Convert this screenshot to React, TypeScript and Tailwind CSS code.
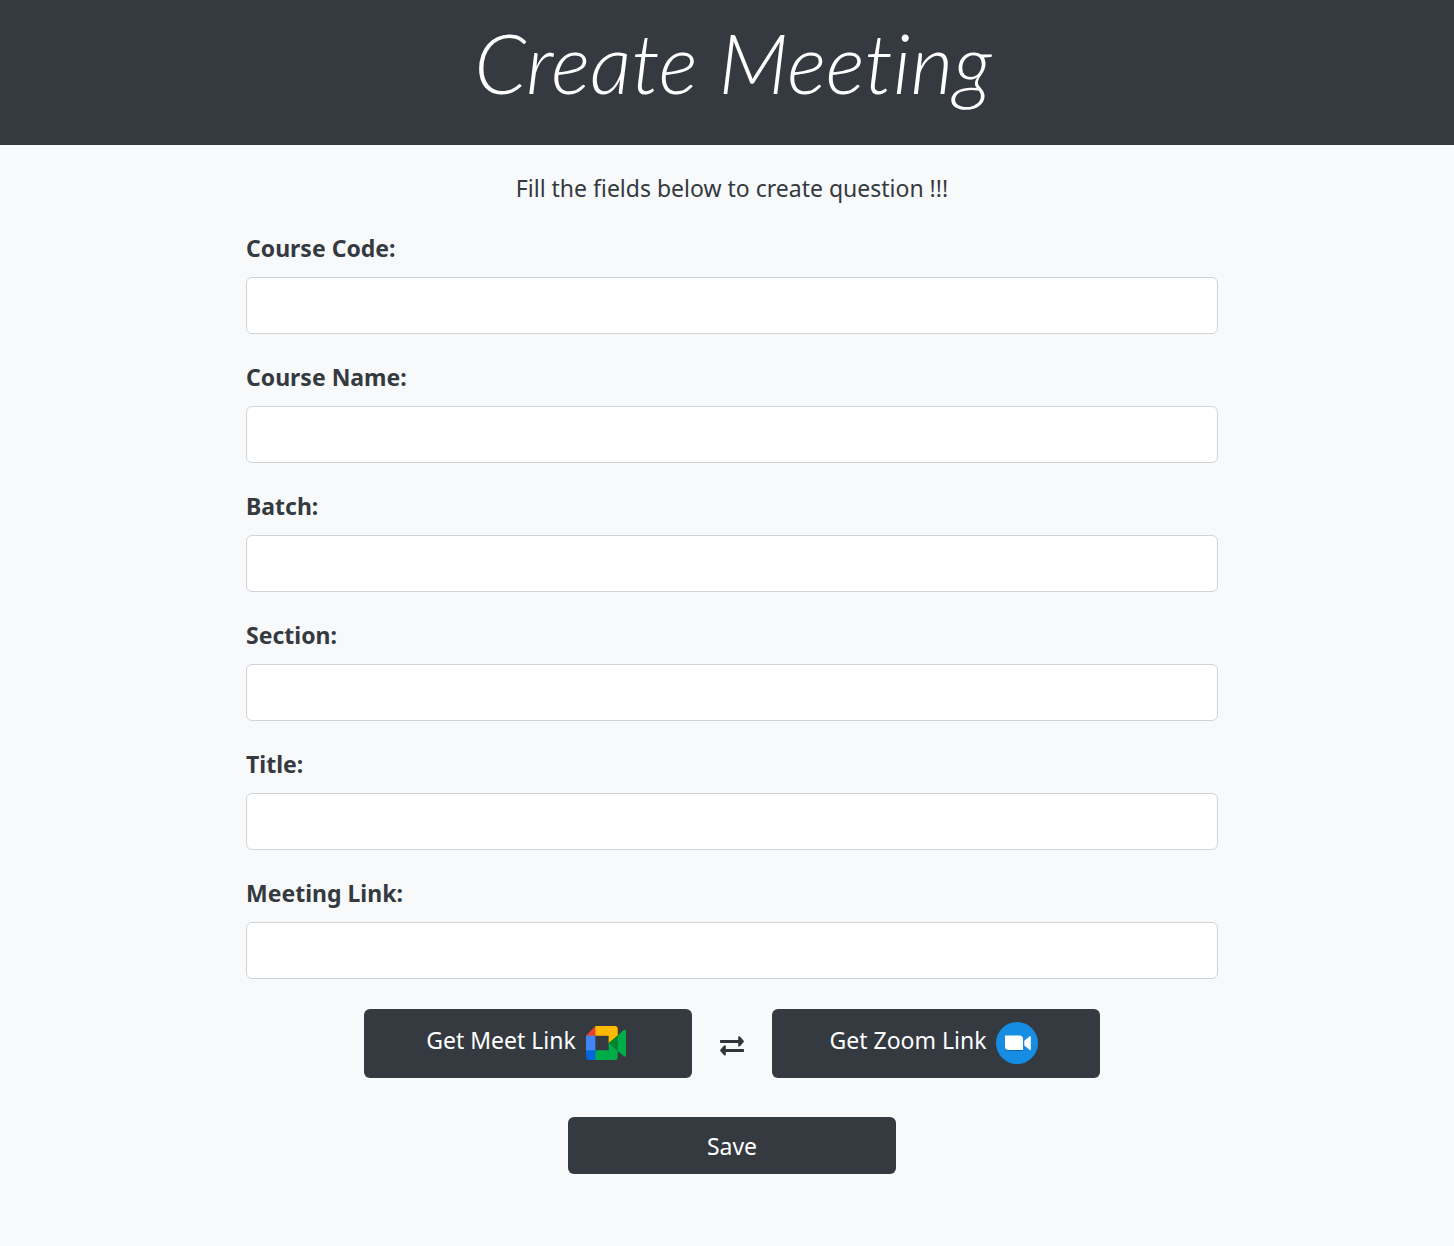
import { useId } from 'react';

const fields = ['Course Code:', 'Course Name:', 'Batch:', 'Section:', 'Title:', 'Meeting Link:'];

function Field({ label }: { label: string }) {
  const id = useId();
  return (
    <div className="flex flex-col gap-[11px]">
      <label htmlFor={id} className="font-bold">
        {label}
      </label>
      <input
        id={id}
        type="text"
        className="h-[57px] w-full rounded-md border border-[#ced4da] bg-white px-4 outline-none focus:border-[#80bdff]"
      />
    </div>
  );
}

function MeetIcon() {
  return (
    <svg viewBox="0 0 87.5 72" preserveAspectRatio="none" className="h-[34px] w-10" aria-hidden="true">
      <path fill="#00832d" d="M49.5 36l8.53 9.75 11.47 7.33 2-17.02-2-16.64-11.69 6.44z" />
      <path fill="#0066da" d="M0 51.5V66c0 3.315 2.685 6 6 6h14.5l3-10.96-3-9.54-9.95-3z" />
      <path fill="#e94235" d="M20.500 0L0 20.500l10.550 3 9.950-3 2.950-9.410z" />
      <path fill="#4285f4" d="M20.500 20.500H0v31h20.500z" />
      <path
        fill="#00ac47"
        d="M82.600 8.680L69.500 19.420v33.660l13.160 10.790c1.970 1.540 4.850.135 4.850-2.370V11c0-2.535-2.945-3.925-4.910-2.320zM49.500 36v15.500h-29V72h43c3.315 0 6-2.685 6-6V53.080z"
      />
      <path fill="#ffba00" d="M63.500 0h-43v20.500h29V36l20-16.570V6c0-3.315-2.685-6-6-6z" />
    </svg>
  );
}

function ZoomIcon() {
  return (
    <svg viewBox="0 0 42 44" className="h-11 w-[42px]" aria-hidden="true">
      <circle cx="21" cy="22.500" r="21" fill="#14589c" opacity=".5" />
      <circle cx="21" cy="22" r="21" fill="#168de2" />
      <path d="M9 15.500h14.500a3.500 3.500 0 0 1 3.500 3.500v11H12.500A3.500 3.500 0 0 1 9 26.500z" fill="#0d62ad" />
      <path d="M9 14.500h14.500a3.500 3.500 0 0 1 3.500 3.500v11H12.500A3.500 3.500 0 0 1 9 25.500z" fill="#fff" />
      <path d="M28.300 19.700l5.500-4.500c.5-.4 1-.1 1 .5v12.800c0 .6-.5.9-1 .5l-5.500-4.500z" fill="#fff" />
    </svg>
  );
}

function SwapIcon() {
  return (
    <svg viewBox="0 0 24 20" className="h-5 w-6" aria-hidden="true">
      <g fill="#2f353a">
        <path d="M.8 4h17.400V1.400c0-1 1-1.400 1.700-.8l3.600 4c.5.5.5 1.200 0 1.700l-3.600 3.900c-.7.700-1.700.300-1.700-.7V7H.8a.8.800 0 0 1-.8-.8V4.800A.8.800 0 0 1 .8 4z" />
        <path d="M23.200 13H5.800v-2.600c0-1-1-1.400-1.700-.8l-3.600 4c-.5.500-.5 1.200 0 1.700l3.600 3.900c.7.700 1.700.300 1.700-.7V16h17.400a.8.800 0 0 0 .8-.8v-1.400a.8.800 0 0 0-.8-.8z" />
      </g>
    </svg>
  );
}

export default function App() {
  return (
    <div className="min-h-screen bg-[#f8f9fb] pb-[72px] font-['Segoe_UI','Noto_Sans',sans-serif] text-[23px] leading-9 text-[#343a40]">
      <header className="bg-[#343a40] pt-2 pb-[29px] pl-3">
        <h1 className="text-center font-['Lato',sans-serif] text-[83px] leading-[108px] font-light text-white italic [font-variant-ligatures:none]">
          Create Meeting
        </h1>
      </header>
      <main className="pt-[25px] pl-2.5">
        <form className="mx-auto flex w-full max-w-[972px] flex-col" onSubmit={(e) => e.preventDefault()}>
          <p className="text-center">Fill the fields below to create question !!!</p>
          <div className="mt-6 flex flex-col gap-[25px]">
            {fields.map((label) => (
              <Field key={label} label={label} />
            ))}
          </div>
          <div className="mt-[30px] flex items-center justify-center gap-7">
            <button type="button" className="flex h-[69px] w-[328px] items-center justify-center gap-2.5 rounded-md bg-[#343a40] pr-1 pb-0.5 text-white">
              <span className="pb-1.5">Get Meet Link</span>
              <MeetIcon />
            </button>
            <span className="pt-1">
              <SwapIcon />
            </span>
            <button type="button" className="flex h-[69px] w-[328px] items-center justify-center gap-2.5 rounded-md bg-[#343a40] pr-1 pb-0.5 text-white">
              <span className="pb-1.5">Get Zoom Link</span>
              <ZoomIcon />
            </button>
          </div>
          <button type="submit" className="mt-[39px] h-[57px] w-[328px] self-center rounded-md bg-[#343a40] text-white">
            Save
          </button>
        </form>
      </main>
    </div>
  );
}
